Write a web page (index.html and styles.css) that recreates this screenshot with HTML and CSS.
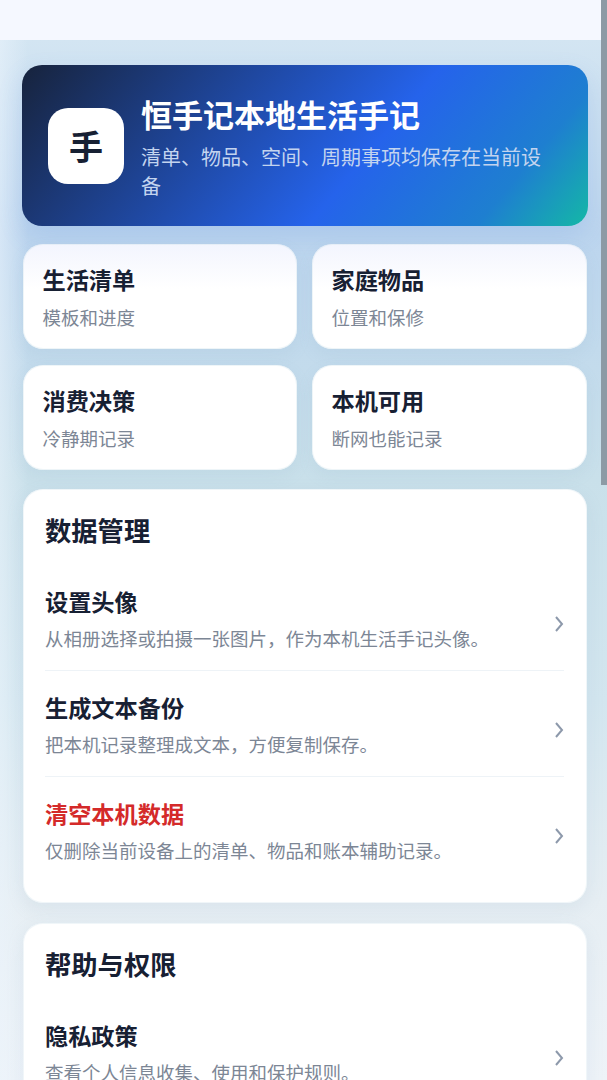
FILE: index.html
```html
<!DOCTYPE html>
<html lang="zh-CN">
<head>
<meta charset="utf-8">
<title>恒手记</title>
<link rel="stylesheet" href="styles.css">
</head>
<body>
<div class="app">
  <header class="topbar"></header>
  <main class="content">
    <section class="hero">
      <div class="logo">手</div>
      <div class="hero-text">
        <h1>恒手记本地生活手记</h1>
        <p>清单、物品、空间、周期事项均保存在当前设备</p>
      </div>
    </section>
    <section class="grid">
      <div class="tile tile-fade"><h3>生活清单</h3><p>模板和进度</p></div>
      <div class="tile tile-fade"><h3>家庭物品</h3><p>位置和保修</p></div>
      <div class="tile"><h3>消费决策</h3><p>冷静期记录</p></div>
      <div class="tile"><h3>本机可用</h3><p>断网也能记录</p></div>
    </section>
    <section class="panel">
      <h2>数据管理</h2>
      <div class="row">
        <div class="row-text"><h4>设置头像</h4><p>从相册选择或拍摄一张图片，作为本机生活手记头像。</p></div>
        <svg class="chev" viewBox="0 0 10 18"><path d="M2 2l6 7-6 7"/></svg>
      </div>
      <div class="row">
        <div class="row-text"><h4>生成文本备份</h4><p>把本机记录整理成文本，方便复制保存。</p></div>
        <svg class="chev" viewBox="0 0 10 18"><path d="M2 2l6 7-6 7"/></svg>
      </div>
      <div class="row">
        <div class="row-text"><h4 class="danger">清空本机数据</h4><p>仅删除当前设备上的清单、物品和账本辅助记录。</p></div>
        <svg class="chev" viewBox="0 0 10 18"><path d="M2 2l6 7-6 7"/></svg>
      </div>
    </section>
    <section class="panel">
      <h2>帮助与权限</h2>
      <div class="row">
        <div class="row-text"><h4>隐私政策</h4><p>查看个人信息收集、使用和保护规则。</p></div>
        <svg class="chev" viewBox="0 0 10 18"><path d="M2 2l6 7-6 7"/></svg>
      </div>
    </section>
  </main>
  <div class="scrollbar"></div>
</div>
</body>
</html>
```
FILE: styles.css
```css
* { box-sizing: border-box; margin: 0; padding: 0; }
html, body { height: 1080px; overflow: hidden; }
body { font-family: "Noto Sans CJK SC", "Noto Sans", sans-serif; color: #172033; }
.app {
  position: relative;
  height: 1080px;
  overflow: hidden;
  background:
    linear-gradient(90deg, rgba(235,244,252,.55) 0, rgba(235,244,252,0) 28px),
    linear-gradient(180deg, #d3e5f2 40px, #bcd5ee 235px, #c9e0ea 480px, #d3e6ef 700px, #e6eef3 900px, #eef3f8 1080px);
}
.topbar { height: 40px; background: #f5f8ff; }
.content { height: 1040px; overflow: hidden; padding: 25px 19px 0 22px; }
.hero {
  height: 161px;
  border-radius: 20px;
  padding: 0 30px 0 26px;
  display: flex;
  align-items: center;
  gap: 17px;
  background: linear-gradient(130deg, #17233c 0%, #2563eb 60%, #1e7fd0 84%, #14b8a6 100%);
  box-shadow: 0 10px 24px rgba(90,140,220,.18);
}
.logo {
  flex: none;
  width: 76px;
  height: 76px;
  border-radius: 20px;
  background: #fff;
  color: #172033;
  font-size: 34px;
  font-weight: 600;
  display: flex;
  align-items: center;
  justify-content: center;
}
.hero-text { flex: 1; margin-top: 2px; }
.hero h1 { font-size: 31px; line-height: 40px; font-weight: 700; color: #fff; margin-bottom: 8px; }
.hero p { font-size: 20px; line-height: 29px; color: #c3d4ef; }
.grid {
  display: grid;
  grid-template-columns: 274px 275px;
  column-gap: 15px;
  row-gap: 16px;
  margin: 18px 0 19px 1px;
}
.tile {
  height: 105px;
  border-radius: 20px;
  background: #fff;
  padding: 18px 19px 0 19.5px;
  box-shadow: inset 0 0 0 1px rgba(205,225,235,.35), 0 6px 16px rgba(120,160,190,.1);
}
.tile-fade { background: linear-gradient(180deg, #f3f5fe 0, #fff 45px); }
.tile h3 { font-size: 23.2px; line-height: 34px; font-weight: 700; color: #172033; }
.tile p { font-size: 18.5px; line-height: 28px; margin-top: 7px; color: #7c8695; }
.panel {
  margin: 0 0 20px 1px;
  width: 564px;
  height: 414px;
  border-radius: 20px;
  background: #fff;
  padding: 21px 23px 0 22px;
  box-shadow: inset 0 0 0 1px rgba(205,225,235,.3), 0 6px 18px rgba(120,160,190,.12);
}
.panel h2 { font-size: 26.3px; line-height: 40px; font-weight: 700; color: #172033; margin-bottom: 15px; }
.row {
  display: flex;
  align-items: flex-start;
  justify-content: space-between;
  height: 106px;
  border-bottom: 1px solid #eef3f7;
}
.row:last-child { border-bottom: 0; }
.row-text { margin-top: 19px; }
.row h4 { font-size: 23.2px; line-height: 34px; font-weight: 700; color: #172033; }
.row h4.danger { color: #d42a2a; }
.row p { font-size: 18.5px; line-height: 28px; margin-top: 6px; color: #7c8695; }
.chev { flex: none; width: 10px; height: 18px; fill: none; stroke: #8d99ab; stroke-width: 2; margin-top: 50px; }
.scrollbar { position: absolute; top: 0; right: 0; width: 6px; height: 485px; background: #8c9aa5; }
```
